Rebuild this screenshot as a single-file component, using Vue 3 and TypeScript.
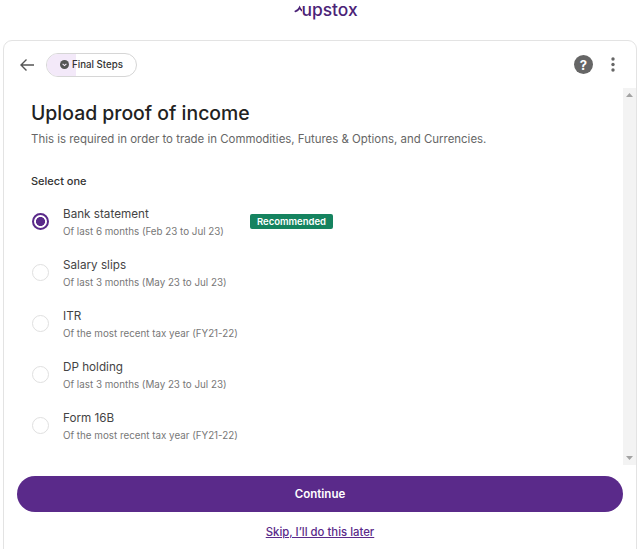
<script setup lang="ts">
interface Option {
  title: string;
  note: string;
  selected?: boolean;
  badge?: string;
}

const options: Option[] = [
  { title: 'Bank statement', note: 'Of last 6 months (Feb 23 to Jul 23)', selected: true, badge: 'Recommended' },
  { title: 'Salary slips', note: 'Of last 3 months (May 23 to Jul 23)' },
  { title: 'ITR', note: 'Of the most recent tax year (FY21-22)' },
  { title: 'DP holding', note: 'Of last 3 months (May 23 to Jul 23)' },
  { title: 'Form 16B', note: 'Of the most recent tax year (FY21-22)' },
];
</script>

<template>
  <div class="page">
    <div class="brand">
      <svg class="brand-tick" width="8" height="9" viewBox="0 0 8 9">
        <path d="M1.4 7.4 Q4 6.8 5.6 3.6 Q6.4 5.4 8 6.6" fill="none" stroke="#4b2377" stroke-width="1.8" stroke-linecap="round" />
      </svg>
      <span>upstox</span>
    </div>

    <div class="card">
      <div class="top">
        <svg class="back" width="16" height="14" viewBox="0 0 16 14">
          <path d="M15 7H2M7.5 1.5 2 7l5.5 5.5" fill="none" stroke="#555" stroke-width="1.4" />
        </svg>
        <div class="pill">
          <span class="pill-fill"></span>
          <svg class="pill-icon" width="9" height="9" viewBox="0 0 9 9">
            <circle cx="4.5" cy="4.5" r="4.5" fill="#555" />
            <path d="M2.6 3.8 4.5 5.6 6.4 3.8" fill="none" stroke="#f4eafa" stroke-width="1.1" />
          </svg>
          <span class="pill-text">Final Steps</span>
        </div>
        <div class="top-actions">
          <span class="help">?</span>
          <svg width="4" height="15" viewBox="0 0 4 15">
            <circle cx="2" cy="2" r="1.7" fill="#666" />
            <circle cx="2" cy="7.5" r="1.7" fill="#666" />
            <circle cx="2" cy="13" r="1.7" fill="#666" />
          </svg>
        </div>
      </div>

      <div class="scroll-area">
        <div class="content">
          <h1>Upload proof of income</h1>
          <p class="lead">This is required in order to trade in Commodities, Futures &amp; Options, and Currencies.</p>
          <div class="select-label">Select one</div>

          <div class="options">
            <div v-for="opt in options" :key="opt.title" class="option">
              <span class="radio" :class="{ on: opt.selected }"></span>
              <div class="option-text">
                <div class="option-title">{{ opt.title }}</div>
                <div class="option-note">{{ opt.note }}</div>
              </div>
              <span v-if="opt.badge" class="badge">{{ opt.badge }}</span>
            </div>
          </div>
        </div>

        <div class="scrollbar">
          <svg width="7" height="4" viewBox="0 0 7 4"><path d="M3.5 0 7 4H0z" fill="#a3a3a3" /></svg>
          <svg width="7" height="4" viewBox="0 0 7 4"><path d="M0 0h7L3.5 4z" fill="#a3a3a3" /></svg>
        </div>
      </div>

      <div class="footer">
        <button class="continue">Continue</button>
        <a class="skip">Skip, I’ll do this later</a>
      </div>
    </div>
  </div>
</template>

<style>
html,
body {
  margin: 0;
  background: #fff;
  overflow: hidden;
}
</style>

<style scoped>
.page {
  width: 638px;
  height: 549px;
  overflow: hidden;
  font-family: Inter, "Liberation Sans", sans-serif;
  color: #333;
}

.brand {
  height: 40px;
  display: flex;
  justify-content: center;
  align-items: flex-start;
  padding-left: 14px;
  box-sizing: border-box;
  color: #4b2377;
  font-size: 17.4px;
  font-weight: 500;
  line-height: 19px;
}

.brand-tick {
  margin-top: 4px;
  margin-right: -1px;
}

.card {
  margin-left: 3px;
  width: 634px;
  height: 520px;
  box-sizing: border-box;
  border: 1px solid #e3e3e3;
  border-radius: 9px;
  display: flex;
  flex-direction: column;
}

.top {
  height: 47px;
  display: flex;
  align-items: center;
  padding: 0 20px 0 15px;
  flex-shrink: 0;
}

.back {
  margin-right: 11px;
}

.pill {
  position: relative;
  width: 91px;
  height: 24px;
  box-sizing: border-box;
  border: 1px solid #d6d6d6;
  border-radius: 12px;
  overflow: hidden;
  display: flex;
  align-items: center;
  padding-left: 13px;
  gap: 3px;
}

.pill-fill {
  position: absolute;
  left: 0;
  top: 0;
  bottom: 0;
  width: 29px;
  background: #f3e9f9;
}

.pill-icon,
.pill-text {
  position: relative;
}

.pill-text {
  font-size: 9.7px;
  font-weight: 500;
  color: #333;
}

.top-actions {
  margin-left: auto;
  display: flex;
  align-items: center;
  gap: 18px;
  transform: translateX(-1px);
}

.help {
  width: 19px;
  height: 19px;
  border-radius: 50%;
  background: #666;
  color: #fff;
  font-size: 13px;
  font-weight: 700;
  display: flex;
  align-items: center;
  justify-content: center;
}

.scroll-area {
  height: 377px;
  display: flex;
  flex-shrink: 0;
}

.content {
  flex: 1;
  padding: 0 0 0 27px;
}

h1 {
  margin: 13px 0 0;
  font-size: 19.4px;
  line-height: 24px;
  font-weight: 500;
  color: #222;
}

.lead {
  margin: 6px 0 0;
  font-size: 11.45px;
  line-height: 16px;
  color: #666;
}

.select-label {
  margin-top: 27px;
  font-size: 11px;
  line-height: 14px;
  font-weight: 500;
  color: #333;
}

.options {
  margin-top: 15px;
  display: flex;
  flex-direction: column;
  gap: 13px;
}

.option {
  height: 38px;
  display: flex;
  align-items: center;
}

.radio {
  width: 17px;
  height: 17px;
  box-sizing: border-box;
  border: 1.5px solid #e0e0e0;
  border-radius: 50%;
  margin-left: 0.5px;
  margin-right: 14.5px;
  margin-top: -1px;
  flex-shrink: 0;
}

.radio.on {
  border: 2px solid #5a2a8a;
  background: radial-gradient(circle, #5a2a8a 0 4.2px, #fff 4.8px);
}

.option-text {
  width: 187px;
}

.option-title {
  font-size: 11.7px;
  line-height: 16px;
  color: #444;
}

.option-note {
  margin-top: 3px;
  font-size: 9.8px;
  line-height: 13px;
  color: #777;
}

.badge {
  align-self: flex-start;
  margin-top: 11px;
  background: #15835f;
  color: #fff;
  border-radius: 2px;
  font-size: 9.5px;
  font-weight: 600;
  line-height: 15px;
  padding: 0 7px;
}

.scrollbar {
  width: 13px;
  background: #f3f3f3;
  display: flex;
  flex-direction: column;
  justify-content: space-between;
  align-items: center;
  padding: 5px 0;
  box-sizing: border-box;
}

.footer {
  display: flex;
  flex-direction: column;
  align-items: center;
  padding: 11px 13px 0;
}

.continue {
  width: 100%;
  height: 36px;
  border: none;
  border-radius: 18px;
  background: #5a2a8a;
  color: #fff;
  font-family: inherit;
  font-size: 11.5px;
  font-weight: 600;
}

.skip {
  margin-top: 13px;
  font-size: 11.35px;
  line-height: 14px;
  font-weight: 500;
  color: #5a2a8a;
  text-decoration: underline;
}
</style>
